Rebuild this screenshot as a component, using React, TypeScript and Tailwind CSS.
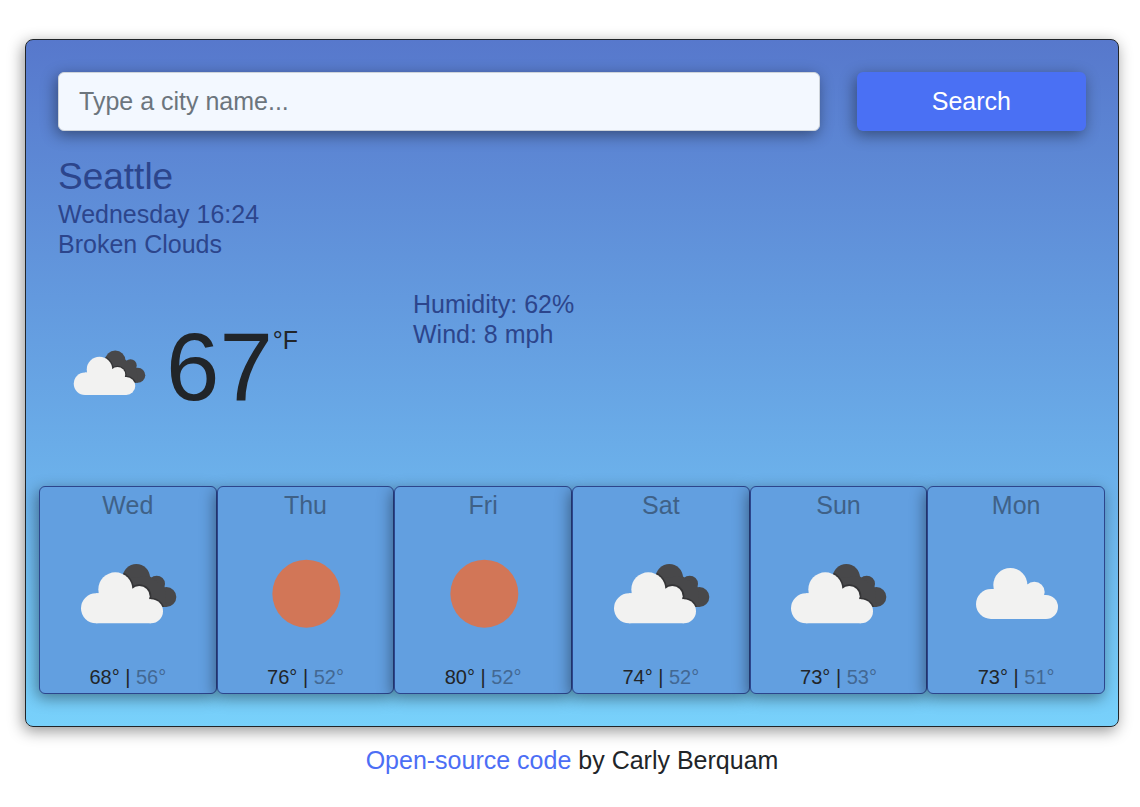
import { useId } from "react";

type IconName = "broken" | "clear" | "cloudy";

interface Day {
  name: string;
  icon: IconName;
  high: number;
  low: number;
}

const days: Day[] = [
  { name: "Wed", icon: "broken", high: 68, low: 56 },
  { name: "Thu", icon: "clear", high: 76, low: 52 },
  { name: "Fri", icon: "clear", high: 80, low: 52 },
  { name: "Sat", icon: "broken", high: 74, low: 52 },
  { name: "Sun", icon: "broken", high: 73, low: 53 },
  { name: "Mon", icon: "cloudy", high: 73, low: 51 },
];

function Cloud() {
  return (
    <g fill="#f2f2f1">
      <circle cx="228" cy="415" r="45" />
      <circle cx="286" cy="358" r="51" />
      <circle cx="358" cy="379" r="31" />
      <circle cx="393" cy="424" r="36" />
      <path d="M228 460V370H235L286 340L335 355L388 388H393V460Z" />
    </g>
  );
}

function DarkCloud() {
  return (
    <>
      <circle cx="349" cy="323" r="41" />
      <circle cx="410" cy="342" r="25" />
      <circle cx="439" cy="381" r="30" />
      <path d="M325 325L388 318L434 351L439 411H410L335 350Z" />
    </>
  );
}

function WeatherIcon({ name, className }: { name: IconName; className: string }) {
  const clipId = useId();
  return (
    <svg viewBox="144 192 360 360" className={className} aria-hidden="true">
      {name === "clear" && <circle cx="328" cy="371" r="102" fill="#d27657" />}
      {name === "cloudy" && (
        <g transform="translate(21 -13)">
          <Cloud />
        </g>
      )}
      {name === "broken" && (
        <>
          <clipPath id={clipId}>
            <circle cx="349" cy="323" r="41" />
            <circle cx="410" cy="342" r="25" />
            <circle cx="439" cy="381" r="30" />
            <path d="M325 325L388 318L434 351L439 411H410L335 350Z" />
          </clipPath>
          <g fill="#48484a">
            <DarkCloud />
          </g>
          <g clipPath={`url(#${clipId})`} fill="#343436">
            <circle cx="286" cy="358" r="56" />
            <circle cx="358" cy="379" r="36" />
            <circle cx="393" cy="424" r="41" />
          </g>
          <Cloud />
        </>
      )}
    </svg>
  );
}

export default function App() {
  return (
    <div className="pt-[39px] pr-[21px] pl-[25px] font-['Liberation_Sans',Arial,sans-serif] text-[25px] leading-[30px] text-[#212529]">
      <main className="rounded-lg border border-[#212529] bg-linear-to-b from-[#5778cc] to-[#78d1fb] px-[13px] pt-8 pb-8 shadow-[-2px_4px_15px_rgba(0,0,0,0.42)]">
        <div className="px-[19px] text-[#2c458c]">
          <form className="grid grid-cols-12 gap-x-[37px]" onSubmit={(e) => e.preventDefault()}>
            <input
              type="search"
              aria-label="City name"
              placeholder="Type a city name..."
              className="col-span-9 h-[59px] min-w-0 rounded-md border border-[#ced4da] bg-[#f3f8ff] px-5 text-[#212529] shadow-[-2px_4px_15px_rgba(0,0,0,0.42)] outline-none placeholder:text-[#6c757d]"
            />
            <button
              type="submit"
              className="col-span-3 h-[59px] rounded-md bg-[#4a70f4] pb-[2px] text-white shadow-[-2px_4px_15px_rgba(0,0,0,0.42)]"
            >
              Search
            </button>
          </form>
          <h1 className="mt-6 text-[37px] leading-[44px]">Seattle</h1>
          <p>Wednesday 16:24</p>
          <p>Broken Clouds</p>
          <div className="mt-[30px] grid grid-cols-3 gap-x-[37px] pb-[52px]">
            <div className="flex items-start pt-[11px] pl-[6px] text-[#212529]">
              <WeatherIcon name="broken" className="mt-7 size-[90px] shrink-0" />
              <span className="ml-3 text-[96px] leading-[134px]">67</span>
              <span className="mt-[25px]">°F</span>
            </div>
            <div>
              <p>Humidity: 62%</p>
              <p>Wind: 8 mph</p>
            </div>
          </div>
        </div>
        <div className="grid grid-cols-6">
          {days.map((day) => (
            <section
              key={day.name}
              className="flex flex-col items-center rounded-md border border-[#2c458c] bg-[#629fe0] pt-[3px] pb-px shadow-[-2px_4px_15px_rgba(0,0,0,0.42)]"
            >
              <h2 className="text-[#3f6187]">{day.name}</h2>
              <WeatherIcon name={day.icon} className="mt-[14px] size-[120px]" />
              <p className="mt-2 text-[20px]">
                {day.high}° | <span className="text-[#426893]">{day.low}°</span>
              </p>
            </section>
          ))}
        </div>
      </main>
      <footer className="mt-[18px] text-center">
        <a href="#source" className="text-[#4c6ef5]">
          Open-source code
        </a>{" "}
        by Carly Berquam
      </footer>
    </div>
  );
}
